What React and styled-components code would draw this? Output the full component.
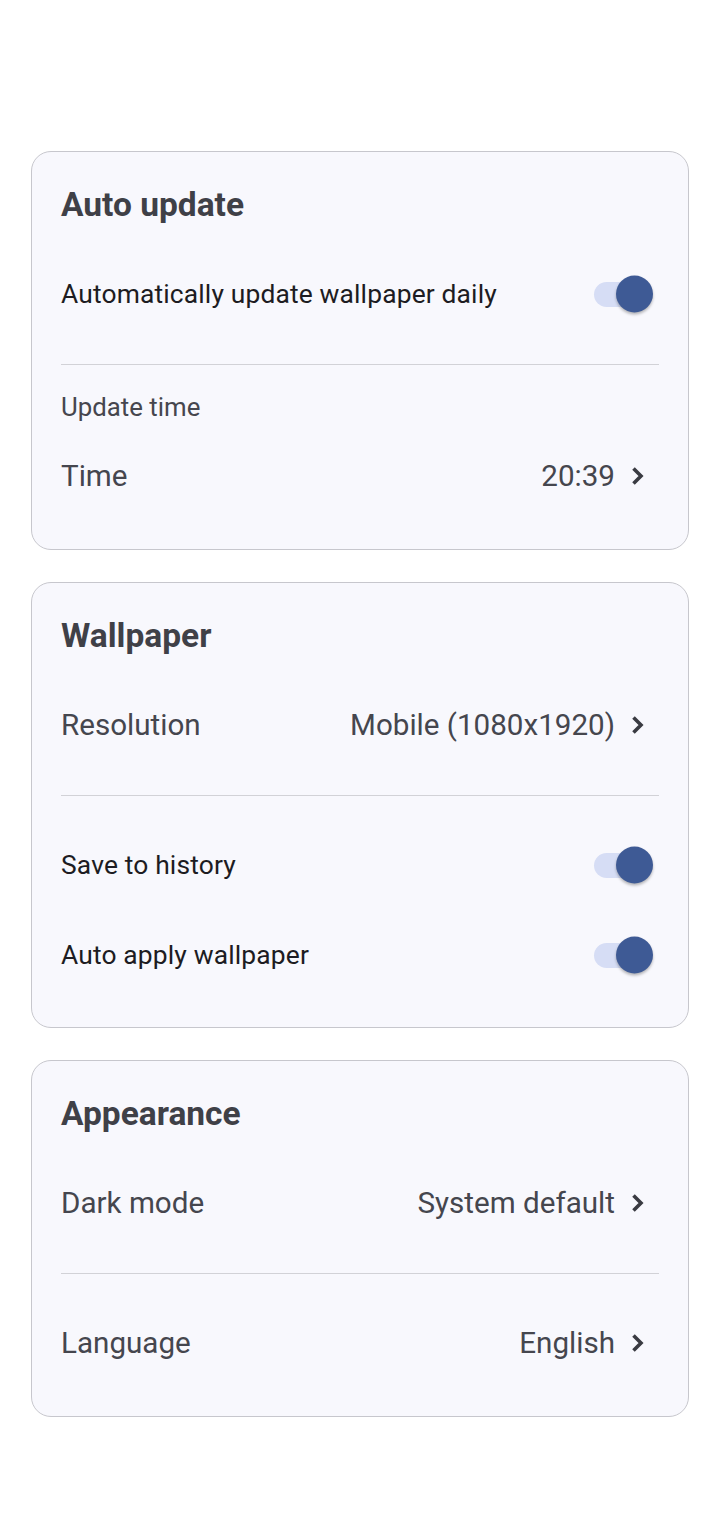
import React from "react";
import styled, { createGlobalStyle } from "styled-components";

const Global = createGlobalStyle`
  html, body { margin: 0; padding: 0; background: #ffffff; }
  body { font-family: Roboto, "Noto Sans", sans-serif; -webkit-font-smoothing: antialiased; }
`;

const Page = styled.div`
  width: 720px;
  min-height: 1529px;
  box-sizing: border-box;
  padding: 151px 31px 0 31px;
  display: flex;
  flex-direction: column;
  gap: 32px;
`;

const Card = styled.section`
  background: #f8f8fd;
  border: 1px solid #c7c7cd;
  border-radius: 20px;
  padding: 0 29px ${(p) => p.$pb ?? 28}px 29px;
  display: flex;
  flex-direction: column;
`;

const Title = styled.h2`
  margin: 0;
  padding: 32px 0 23px;
  font-size: 33.5px;
  line-height: 42px;
  font-weight: 700;
  color: #3f4047;
  letter-spacing: 0;
`;

const Row = styled.div`
  height: 90px;
  display: flex;
  align-items: center;
  justify-content: space-between;
`;

const SwitchLabel = styled.span`
  font-size: 26.4px;
  color: #1d1c22;
  letter-spacing: 0.15px;
`;

const NavLabel = styled.span`
  font-size: 29.6px;
  color: #45464e;
`;

const NavValue = styled.span`
  display: flex;
  align-items: center;
  gap: 5px;
  margin-right: 5px;
  font-size: 29.6px;
  color: #45464e;
`;

const Divider = styled.hr`
  border: none;
  height: 1px;
  background: #d2d2d7;
  margin: 25px 0 24px;
`;

const SubHeader = styled.div`
  font-size: 25.8px;
  line-height: 30px;
  color: #46464e;
  margin: 3px 0 9px;
`;

const Track = styled.span`
  position: relative;
  display: inline-block;
  width: 58px;
  height: 25px;
  border-radius: 13px;
  background: #d6ddf5;
  margin-right: 7px;
`;

const Thumb = styled.span`
  position: absolute;
  top: 50%;
  right: -1px;
  width: 37px;
  height: 37px;
  border-radius: 50%;
  background: #3e5a95;
  transform: translateY(-50%);
  box-shadow: 0 2px 3px rgba(0, 0, 0, 0.28);
`;

const Chevron = () => (
  <svg width="34" height="34" viewBox="0 0 34 34" fill="none">
    <path d="M13.5 9.5L21 17l-7.5 7.5" stroke="#3a3b42" strokeWidth="3.6" strokeLinejoin="miter" />
  </svg>
);

const Toggle = () => (
  <Track>
    <Thumb />
  </Track>
);

const SwitchRow = ({ label }) => (
  <Row>
    <SwitchLabel>{label}</SwitchLabel>
    <Toggle />
  </Row>
);

const NavRow = ({ label, value }) => (
  <Row>
    <NavLabel>{label}</NavLabel>
    <NavValue>
      {value}
      <Chevron />
    </NavValue>
  </Row>
);

export default function App() {
  return (
    <>
      <Global />
      <Page>
        <Card>
          <Title>Auto update</Title>
          <SwitchRow label="Automatically update wallpaper daily" />
          <Divider />
          <SubHeader>Update time</SubHeader>
          <NavRow label="Time" value="20:39" />
        </Card>
        <Card $pb={27}>
          <Title>Wallpaper</Title>
          <NavRow label="Resolution" value="Mobile (1080x1920)" />
          <Divider />
          <SwitchRow label="Save to history" />
          <SwitchRow label="Auto apply wallpaper" />
        </Card>
        <Card>
          <Title>Appearance</Title>
          <NavRow label="Dark mode" value="System default" />
          <Divider />
          <NavRow label="Language" value="English" />
        </Card>
      </Page>
    </>
  );
}
